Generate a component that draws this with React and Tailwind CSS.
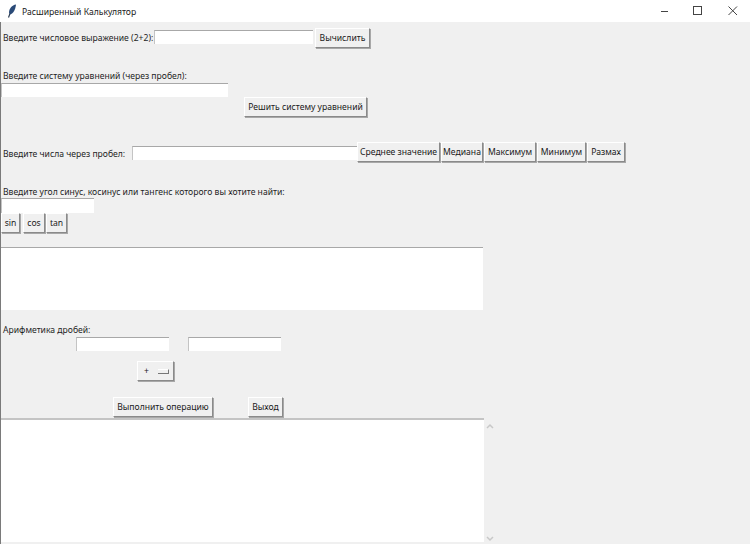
import React from 'react';

const Btn = ({children, className = ''}) => (
  <button className={`h-[20px] shrink-0 whitespace-nowrap bg-[#f0f0f0] border border-t-white border-l-white border-r-[#8a8a8a] border-b-[#8a8a8a] shadow-[1px_1px_0_#a8a8a8] text-center leading-[17px] text-[#1a1a1a] ${className}`}>
    {children}
  </button>
);

const Field = ({className = ''}) => (
  <div className={`h-[14px] shrink-0 bg-white border-t border-l border-t-[#a8a8a8] border-l-[#c4c4c4] ${className}`} />
);

const Label = ({children, className = ''}) => (
  <span className={`shrink-0 whitespace-nowrap leading-[14px] text-[#1f1f1f] ${className}`}>{children}</span>
);

export default function App() {
  return (
    <div className="h-[544px] w-[750px] overflow-hidden flex flex-col bg-[#f0f0f0] text-[8.6px] font-['Noto_Sans','Open_Sans',sans-serif]">
      <div className="h-[22px] shrink-0 bg-white flex items-center">
        <svg width="10" height="14" viewBox="0 0 10 14" className="ml-[7px]">
          <path d="M9 0.5 C5 1 2 4.5 2 9 L3 10.5 C6.5 9.5 8.5 5.5 9 0.5Z" fill="#2a4a78" />
          <path d="M3 9.5 L1.5 13.5" stroke="#27384f" strokeWidth="1.2" fill="none" />
        </svg>
        <span className="ml-[5px] pt-[2px] text-[#1a1a1a]">Расширенный Калькулятор</span>
        <div className="ml-auto flex items-center">
          <svg width="12" height="12" viewBox="0 0 12 12" className="mr-[23px]"><path d="M4 6.5H11" stroke="#444" /></svg>
          <svg width="12" height="12" viewBox="0 0 12 12" className="mr-[23px]"><rect x="1.5" y="1.5" width="8" height="8" fill="none" stroke="#444" /></svg>
          <svg width="12" height="12" viewBox="0 0 12 12" className="mr-[11px]"><path d="M1.5 1.5L10 10M10 1.5L1.5 10" stroke="#444" /></svg>
        </div>
      </div>

      <div className="flex-1 min-h-0 flex flex-col border-l border-l-[#7a7a7a]">
        <div className="mt-[6px] h-[20px] flex items-center shrink-0">
          <Label className="ml-[2px] w-[151px]">Введите числовое выражение (2+2):</Label>
          <Field className="w-[159px] self-start mt-[2px]" />
          <Btn className="ml-[2px] w-[55px]">Вычислить</Btn>
        </div>

        <Label className="mt-[21px] ml-[2px]">Введите систему уравнений (через пробел):</Label>
        <Field className="w-[227px]" />
        <Btn className="ml-[243px] w-[123px]">Решить систему уравнений</Btn>

        <div className="mt-[25px] h-[20px] flex items-center shrink-0">
          <Label className="ml-[2px] w-[129px] pt-[3px]">Введите числа через пробел:</Label>
          <Field className="w-[225px] self-start mt-[4px]" />
          <Btn className="w-[83px]">Среднее значение</Btn>
          <Btn className="ml-px w-[42px]">Медиана</Btn>
          <Btn className="ml-px w-[52px]">Максимум</Btn>
          <Btn className="ml-px w-[49px]">Минимум</Btn>
          <Btn className="ml-px w-[38px]">Размах</Btn>
        </div>

        <Label className="mt-[23px] ml-[2px]">Введите угол синус, косинус или тангенс которого вы хотите найти:</Label>
        <Field className="-mt-px w-[93px] h-[15px]" />
        <div className="flex h-[20px] shrink-0">
          <Btn className="w-[19px]">sin</Btn>
          <Btn className="ml-[3px] w-[22px]">cos</Btn>
          <Btn className="ml-px w-[21px]">tan</Btn>
        </div>

        <div className="mt-[14px] h-[63px] w-[482px] shrink-0 bg-white border-t border-t-[#a8a8a8]" />

        <Label className="mt-[13px] ml-[2px]">Арифметика дробей:</Label>
        <div className="flex shrink-0">
          <Field className="ml-[75px] w-[93px]" />
          <Field className="ml-[19px] w-[93px]" />
        </div>

        <div className="mt-[10px] ml-[136px] h-[20px] w-[37px] shrink-0 flex items-center bg-[#f0f0f0] border border-t-white border-l-white border-r-[#8a8a8a] border-b-[#8a8a8a] shadow-[1px_1px_0_#a8a8a8]">
          <span className="ml-[6px] leading-none text-[#1a1a1a]">+</span>
          <span className="ml-auto mr-[4px] h-[5px] w-[11px] border-t border-t-white border-b border-r border-b-[#777] border-r-[#777]" />
        </div>

        <div className="mt-[16px] flex shrink-0">
          <Btn className="ml-[112px] w-[100px]">Выполнить операцию</Btn>
          <Btn className="ml-[35px] w-[35px]">Выход</Btn>
        </div>

        <div className="mt-px mb-[2px] flex flex-1 min-h-0">
          <div className="w-[483px] bg-white border-t-2 border-t-[#c4c4c4]" />
          <div className="ml-px w-[10px] flex flex-col items-center justify-between pt-[5px]">
            <svg width="8" height="6" viewBox="0 0 8 6"><path d="M1 5L4 2L7 5" fill="none" stroke="#c8c8c8" strokeWidth="1.5" /></svg>
            <svg width="8" height="6" viewBox="0 0 8 6"><path d="M1 1L4 4L7 1" fill="none" stroke="#c8c8c8" strokeWidth="1.5" /></svg>
          </div>
        </div>
      </div>
    </div>
  );
}
